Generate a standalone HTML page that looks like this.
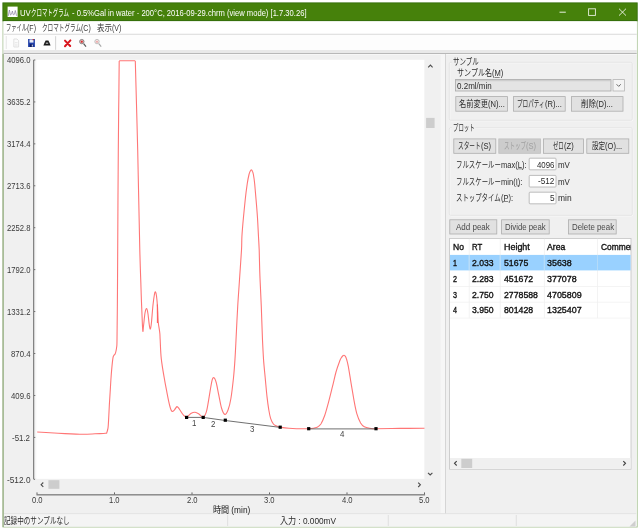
<!DOCTYPE html>
<html lang="ja"><head><meta charset="utf-8"><title>UVクロマトグラム</title>
<style>
html,body{margin:0;padding:0;background:#fff}
body{width:640px;height:530px;position:relative;overflow:hidden;font-family:"Liberation Sans","Noto Sans CJK JP",sans-serif}
#bg{position:absolute;left:0;top:0}
#txt{position:absolute;left:0;top:0;width:640px;height:530px;will-change:transform;transform:translateZ(0)}
.t{position:absolute;white-space:pre;line-height:14px;height:14px;display:block}
.s{display:inline-block;white-space:pre;transform-origin:0 50%;overflow:visible}
</style></head><body>
<svg id="bg" width="640" height="530" viewBox="0 0 640 530">
<!-- window frame -->
<rect x="2.5" y="2.5" width="635.2" height="525" fill="#a9c496"/>
<rect x="3.5" y="3.5" width="633.3" height="523" fill="#fff"/>
<rect x="4" y="20" width="632.2" height="506.4" fill="#f0f0f0"/>
<!-- title bar -->
<rect x="2.5" y="2.5" width="635.1" height="18.8" fill="#356f0c"/>
<rect x="3.3" y="3.3" width="633.5" height="16.8" fill="#46810b"/>
<!-- app icon -->
<rect x="7.6" y="6.6" width="10" height="10.4" fill="#fff"/>
<path d="M8.2 16 L9.4 10 L10.4 15 L11.5 14.2 L12.4 11 L13.3 14.8 L14.4 14.3 L15.3 10.5 L16.6 15.8" fill="none" stroke="#85789a" stroke-width="0.65"/>
<!-- caption buttons -->
<path d="M559.5 12.2 H565.8" stroke="#e8f0e0" stroke-width="1"/>
<rect x="588.6" y="8.8" width="6.8" height="6.6" fill="none" stroke="#e8f0e0" stroke-width="0.9"/>
<path d="M619 8.7 L626 15.6 M626 8.7 L619 15.6" stroke="#f0f5ea" stroke-width="0.9"/>
<!-- menu bar -->
<rect x="3.6" y="21.3" width="633.1" height="12.6" fill="#fff"/>
<!-- toolbar -->
<rect x="3.6" y="34" width="633.1" height="16" fill="#fdfdfd"/>
<rect x="3.6" y="33.8" width="633.1" height="0.9" fill="#d6d6d6"/>
<rect x="3.6" y="50" width="633.1" height="3" fill="#e9e9e9"/>
<rect x="3.6" y="53" width="633.1" height="1" fill="#b8b8b8"/>
<rect x="3.6" y="54" width="633.1" height="1" fill="#f7f7f7"/>
<rect x="5.8" y="36" width="0.8" height="13" fill="#e0e0e0"/>
<!-- toolbar icons -->
<g id="ico-new" opacity="0.55">
<path d="M13.8 39 H17 L18.6 40.6 V47 H13.8 Z" fill="#fafafa" stroke="#b8b8b8" stroke-width="0.7"/>
<path d="M14.8 42.5 H17.6 M14.8 44.2 H17.6 M14.8 45.8 H17.6" stroke="#c8c8c8" stroke-width="0.6"/>
</g>
<g id="ico-save">
<rect x="28.1" y="39" width="6.8" height="8" fill="#1f3fa8"/>
<rect x="29.5" y="39.4" width="4" height="3.2" fill="#e8ecf8"/>
<rect x="29.8" y="44.2" width="3.4" height="2.8" fill="#0a1a60"/>
<rect x="31.8" y="44.6" width="1" height="2" fill="#dfe4f5"/>
<rect x="32.6" y="39" width="1.4" height="1.2" fill="#c03030"/>
</g>
<g id="ico-prn">
<path d="M43.4 45.6 L44.6 42.4 L45.6 40.6 H48.4 L49.4 42.4 L50.6 45.6 Z" fill="#1a1a1a"/>
<rect x="45.8" y="42.6" width="2.4" height="1.2" fill="#bbb"/>
</g>
<rect x="55.3" y="36.2" width="0.8" height="13.6" fill="#c8c8c8"/>
<path d="M65 40.6 L70.2 46 M70.4 40.4 L65 46.2" stroke="#d8141c" stroke-width="2" stroke-linecap="round"/>
<g id="ico-z1">
<circle cx="81.8" cy="41.6" r="2.2" fill="#e8b0b0" stroke="#808080" stroke-width="0.9"/><circle cx="81.8" cy="41.8" r="1" fill="#d03030"/>
<path d="M83.6 43.6 L86 46.6" stroke="#555" stroke-width="1.2"/>
</g>
<g id="ico-z2" opacity="0.7">
<circle cx="97" cy="41.6" r="2.2" fill="#f4d8d8" stroke="#a0a0a0" stroke-width="0.9"/><circle cx="97" cy="41.8" r="0.9" fill="#e07070"/>
<path d="M98.8 43.6 L101.2 46.6" stroke="#888" stroke-width="1.2"/>
</g>
<!-- left pane edge -->
<rect x="2.5" y="54" width="1.3" height="473" fill="#9db28c"/>
<!-- plot -->
<rect x="34" y="59.8" width="3" height="419.1" fill="#f6f6f6"/>
<rect x="36.4" y="59.8" width="388.2" height="419.1" fill="#fff"/>
<rect x="33.3" y="59.8" width="0.9" height="419.6" fill="#555"/>
<g fill="#666">
<rect x="34" y="59.55" width="1.3" height="0.9"/>
<rect x="34" y="101.48" width="1.3" height="0.9"/>
<rect x="34" y="143.41" width="1.3" height="0.9"/>
<rect x="34" y="185.34" width="1.3" height="0.9"/>
<rect x="34" y="227.27" width="1.3" height="0.9"/>
<rect x="34" y="269.20" width="1.3" height="0.9"/>
<rect x="34" y="311.13" width="1.3" height="0.9"/>
<rect x="34" y="353.06" width="1.3" height="0.9"/>
<rect x="34" y="394.99" width="1.3" height="0.9"/>
<rect x="34" y="436.92" width="1.3" height="0.9"/>
<rect x="34" y="478.85" width="1.3" height="0.9"/>
</g>
<!-- v scrollbar -->
<rect x="424.6" y="59.4" width="11" height="419.5" fill="#f0f0f0"/>
<rect x="426.1" y="117.9" width="8.5" height="10.1" fill="#cdcdcd"/>
<path d="M428.2 67.3 L430.4 65.1 L432.6 67.3" fill="none" stroke="#4c4c4c" stroke-width="1.1"/>
<path d="M428 472.8 L430.2 475 L432.4 472.8" fill="none" stroke="#4c4c4c" stroke-width="1.1"/>
<!-- h scrollbar -->
<rect x="35.2" y="478.9" width="389.4" height="10.9" fill="#f0f0f0"/>
<rect x="48.4" y="480.2" width="11" height="8.6" fill="#cdcdcd"/>
<path d="M43.3 482.5 L41.1 484.7 L43.3 486.9" fill="none" stroke="#4c4c4c" stroke-width="1.1"/>
<path d="M418.2 482.6 L420.4 484.8 L418.2 487" fill="none" stroke="#4c4c4c" stroke-width="1.1"/>
<!-- x ruler -->
<rect x="36.5" y="494.3" width="388.6" height="1.1" fill="#666"/>
<g fill="#666">
<rect x="36.50" y="492.4" width="1" height="2"/>
<rect x="114.00" y="492.4" width="1" height="2"/>
<rect x="191.50" y="492.4" width="1" height="2"/>
<rect x="269.00" y="492.4" width="1" height="2"/>
<rect x="346.50" y="492.4" width="1" height="2"/>
<rect x="424.00" y="492.4" width="1" height="2"/>
</g>
<!-- curve -->
<path d="M37.2 432.0 C39.3 432.1 45.4 432.5 50.0 432.8 C54.6 433.1 59.5 433.4 65.0 433.6 C70.5 433.9 78.0 434.3 83.0 434.3 C88.0 434.3 91.2 434.0 95.0 433.8 C98.8 433.6 103.5 433.5 105.5 433.3 C107.5 433.1 106.5 433.1 106.8 432.5 C107.1 431.9 107.3 431.2 107.6 430.0 C107.8 428.8 108.0 429.3 108.3 425.0 C108.6 420.7 109.1 410.2 109.4 404.0 C109.8 397.8 110.1 393.0 110.4 388.0 C110.7 383.0 110.9 378.9 111.3 374.0 C111.7 369.1 112.4 362.0 112.8 358.9 C113.2 355.8 113.4 356.3 113.8 355.5 C114.2 354.7 114.7 354.8 115.1 354.0 C115.5 353.2 115.8 352.1 116.0 351.0 C116.2 349.9 116.4 349.3 116.6 347.5 C116.8 345.7 116.9 347.9 117.0 340.0 C117.1 332.1 117.3 315.0 117.4 300.0 C117.5 285.0 117.6 275.0 117.7 250.0 C117.8 225.0 118.1 175.0 118.3 150.0 C118.5 125.0 118.6 114.8 118.8 100.0 C119.0 85.2 119.1 67.5 119.2 61.0 M119.2 60.8 L135.3 60.8 M135.3 61.0 C135.7 75.8 136.9 118.5 137.7 150.0 C138.4 181.5 139.2 227.1 139.8 250.0 C140.4 272.9 140.7 277.3 141.0 287.7 C141.3 298.1 141.6 305.1 141.9 312.3 C142.2 319.5 142.5 328.9 142.8 331.0 C143.1 333.1 143.2 328.0 143.6 325.0 C144.0 322.0 144.5 315.8 145.0 313.0 C145.5 310.2 146.1 308.3 146.6 308.5 C147.1 308.7 147.6 311.2 148.0 314.0 C148.4 316.8 148.9 322.5 149.3 325.0 C149.7 327.5 150.0 329.5 150.4 329.0 C150.8 328.5 151.1 326.0 151.5 322.0 C151.9 318.0 152.5 309.7 153.0 305.0 C153.5 300.3 154.1 296.2 154.5 294.0 C154.9 291.8 155.2 291.7 155.5 292.0 C155.8 292.3 156.2 293.6 156.5 296.0 C156.8 298.4 157.2 302.3 157.5 306.6 C157.8 310.9 157.8 317.3 158.2 321.7 C158.6 326.1 159.5 329.9 159.8 333.0 C160.1 336.1 159.9 335.7 160.2 340.0 C160.4 344.3 160.6 352.6 161.3 358.9 C162.0 365.2 163.2 372.0 164.2 377.7 C165.1 383.4 166.1 388.1 167.0 392.8 C167.9 397.5 169.0 402.9 169.8 406.0 C170.6 409.1 171.2 410.7 172.0 411.3 C172.8 411.9 173.7 410.6 174.5 409.8 C175.3 409.0 176.2 406.8 177.0 406.6 C177.8 406.5 178.2 407.6 179.2 408.9 C180.2 410.2 181.8 413.1 183.0 414.5 C184.2 415.9 185.0 417.2 186.4 417.0 C187.8 416.8 189.9 414.0 191.3 413.2 C192.8 412.4 193.8 412.2 195.1 412.3 C196.4 412.4 197.6 413.2 198.9 414.0 C200.2 414.8 201.9 417.4 203.2 417.0 C204.4 416.6 205.4 415.1 206.4 411.7 C207.4 408.3 208.3 401.8 209.2 396.6 C210.1 391.4 211.2 383.8 212.0 380.6 C212.8 377.5 213.3 377.4 214.0 377.7 C214.7 378.0 215.4 379.7 216.2 382.5 C217.0 385.3 217.8 390.4 218.7 394.7 C219.6 398.9 220.5 404.7 221.5 408.0 C222.5 411.3 223.8 414.2 224.9 414.5 C226.0 414.8 227.1 412.5 228.1 409.8 C229.1 407.1 230.0 403.9 230.9 398.5 C231.8 393.1 232.8 384.3 233.5 377.7 C234.2 371.1 234.6 365.2 235.0 358.9 C235.4 352.6 235.6 348.7 236.0 340.0 C236.4 331.3 237.1 316.9 237.7 306.6 C238.3 296.3 239.0 287.7 239.6 278.3 C240.2 268.9 241.1 256.9 241.5 250.0 C241.9 243.1 241.6 242.1 241.9 236.8 C242.2 231.5 242.8 224.3 243.4 218.0 C244.0 211.7 244.7 204.7 245.3 199.0 C245.9 193.3 246.6 188.1 247.2 184.0 C247.8 179.9 248.5 176.6 249.0 174.5 C249.5 172.4 249.8 172.0 250.2 171.2 C250.6 170.4 250.9 169.9 251.3 169.9 C251.7 169.9 252.1 170.4 252.4 171.2 C252.8 172.0 253.0 172.4 253.4 174.5 C253.8 176.6 254.3 179.9 254.7 184.0 C255.1 188.1 255.5 193.3 256.0 199.0 C256.5 204.7 257.1 211.7 257.5 218.0 C257.9 224.3 258.2 231.5 258.5 236.8 C258.8 242.1 258.9 243.1 259.2 250.0 C259.4 256.9 259.6 268.9 260.0 278.3 C260.4 287.7 260.9 296.3 261.3 306.6 C261.7 316.9 262.1 331.3 262.5 340.0 C262.9 348.7 263.1 352.6 263.5 358.9 C263.9 365.2 264.6 371.4 265.2 377.7 C265.8 384.0 266.4 391.2 267.0 396.6 C267.6 402.0 268.2 406.2 268.8 409.8 C269.4 413.4 269.8 415.9 270.6 418.3 C271.4 420.7 272.5 422.8 273.4 424.0 C274.3 425.2 275.1 425.3 276.2 425.8 C277.3 426.3 278.1 426.8 280.2 427.2 C282.3 427.6 284.1 428.1 288.9 428.3 C293.6 428.6 304.0 428.9 308.7 428.7 C313.4 428.5 315.2 428.0 317.2 427.2 C319.2 426.4 319.6 425.9 320.9 424.0 C322.1 422.1 323.4 419.1 324.7 415.5 C326.0 411.9 327.2 407.0 328.5 402.3 C329.8 397.6 331.1 392.2 332.3 387.2 C333.6 382.1 334.8 376.4 336.0 372.0 C337.2 367.6 338.9 363.2 339.8 360.8 C340.7 358.4 340.8 358.6 341.3 357.8 C341.8 357.0 342.2 356.4 342.6 356.0 C343.1 355.6 343.5 355.1 344.0 355.2 C344.5 355.3 344.9 355.6 345.4 356.4 C345.9 357.2 346.3 358.3 346.8 360.0 C347.3 361.7 347.6 362.5 348.3 366.4 C349.0 370.3 350.2 377.7 351.1 383.4 C352.1 389.1 353.1 395.4 354.0 400.4 C354.9 405.4 355.7 409.8 356.8 413.6 C357.9 417.4 359.4 420.8 360.6 423.0 C361.9 425.2 362.7 425.9 364.3 426.8 C365.9 427.7 368.1 428.0 370.0 428.3 C371.9 428.6 371.0 428.7 376.0 428.7 C381.0 428.7 391.9 428.5 400.0 428.4 C408.1 428.3 420.4 428.3 424.5 428.3" fill="none" stroke="#ff7676" stroke-width="1.1" stroke-linejoin="round"/>
<path d="M157.4 304.5 L157.5 323" stroke="#ff6060" stroke-width="1.2" fill="none"/>
<!-- baselines -->
<path d="M186.6 417.4 L203.2 417.4 L225.3 420.5 L280.2 427.4 M308.7 428.9 L376 428.9" fill="none" stroke="#606060" stroke-width="0.9"/>
<g fill="#000">
<rect x="185" y="415.8" width="3.2" height="3.2"/>
<rect x="201.6" y="415.8" width="3.2" height="3.2"/>
<rect x="223.7" y="418.6" width="3.2" height="3.2"/>
<rect x="278.6" y="425.6" width="3.2" height="3.2"/>
<rect x="307.1" y="427.1" width="3.2" height="3.2"/>
<rect x="374.4" y="427.1" width="3.2" height="3.2"/>
</g>
<!-- splitter -->
<rect x="440.6" y="54" width="4.4" height="459.6" fill="#f6f6f6"/>
<rect x="445" y="54" width="0.9" height="459.6" fill="#d2d2d2"/>
<!-- group boxes -->
<rect x="449.9" y="62.9" width="183" height="58" rx="1.5" fill="none" stroke="#fafafa" stroke-width="0.8"/>
<rect x="449.3" y="62.3" width="183" height="58" rx="1.5" fill="none" stroke="#e2e2e2" stroke-width="0.8"/>
<rect x="451.8" y="58" width="27.8" height="8" fill="#f0f0f0"/>
<rect x="449.9" y="128.2" width="183" height="87.8" rx="1.5" fill="none" stroke="#fafafa" stroke-width="0.8"/>
<rect x="449.3" y="127.6" width="183" height="87.8" rx="1.5" fill="none" stroke="#e2e2e2" stroke-width="0.8"/>
<rect x="451.8" y="123.5" width="23.6" height="8" fill="#f0f0f0"/>
<!-- combo -->
<rect x="455.4" y="79.6" width="155.6" height="11.4" fill="#e4e4e4" stroke="#a8a8a8" stroke-width="0.8"/>
<rect x="456" y="80.2" width="154.6" height="1" fill="#b8b8b8" opacity="0.6"/>
<rect x="613" y="79.6" width="11.4" height="11.4" fill="#f4f4f4" stroke="#b4b4b4" stroke-width="0.8"/>
<path d="M616.6 84.3 L618.7 86.4 L620.8 84.3" fill="none" stroke="#555" stroke-width="0.9"/>
<!-- buttons -->
<g fill="#e1e1e1" stroke="#adadad" stroke-width="0.8">
<rect x="455.8" y="96.6" width="51.6" height="14.6"/>
<rect x="513.6" y="96.6" width="51.6" height="14.6"/>
<rect x="571.4" y="96.6" width="51.6" height="14.6"/>
<rect x="453.8" y="138.9" width="42" height="14.4"/>
<rect x="543.6" y="138.9" width="39.8" height="14.4"/>
<rect x="586.8" y="138.9" width="42" height="14.4"/>
<rect x="449.8" y="219.8" width="47" height="14.2"/>
<rect x="501.6" y="219.8" width="47.6" height="14.2"/>
<rect x="568.6" y="219.8" width="47.6" height="14.2"/>
</g>
<rect x="498.8" y="138.9" width="41.8" height="14.4" fill="#cccccc" stroke="#bfbfbf" stroke-width="0.8"/>
<!-- inputs -->
<g fill="#fff" stroke="#adadad" stroke-width="0.8">
<rect x="529.2" y="158.2" width="26.8" height="11.6" rx="0.8"/>
<rect x="529.2" y="175.4" width="26.8" height="11.6" rx="0.8"/>
<rect x="529.2" y="192.2" width="26.8" height="11.6" rx="0.8"/>
</g>
<g fill="#444">
<rect x="494.7" y="77" width="5" height="0.6"/>
<rect x="517.5" y="168.6" width="5" height="0.6"/>
<rect x="516.5" y="185.6" width="3.2" height="0.6"/>
<rect x="503" y="201.4" width="5.2" height="0.6"/>
</g>
<!-- table -->
<rect x="449.6" y="238.4" width="181.4" height="230.8" fill="#fff" stroke="#c4c4c4" stroke-width="0.8"/>
<rect x="450" y="254.9" width="180.6" height="15.5" fill="#99d1ff"/>
<g fill="#f0f0f0">
<rect x="468.8" y="238.8" width="0.8" height="79.4"/>
<rect x="499.8" y="238.8" width="0.8" height="79.4"/>
<rect x="543.9" y="238.8" width="0.8" height="79.4"/>
<rect x="597.2" y="238.8" width="0.8" height="79.4"/>
<rect x="450" y="286" width="180.6" height="0.7"/>
<rect x="450" y="301.8" width="180.6" height="0.7"/>
<rect x="450" y="317.7" width="180.6" height="0.7"/>
</g>
<g fill="#a9d7fb">
<rect x="468.8" y="254.9" width="0.8" height="15.5"/>
<rect x="499.8" y="254.9" width="0.8" height="15.5"/>
<rect x="543.9" y="254.9" width="0.8" height="15.5"/>
<rect x="597.2" y="254.9" width="0.8" height="15.5"/>
</g>
<rect x="450" y="458" width="180.6" height="10.8" fill="#f0f0f0"/>
<rect x="461.3" y="458.8" width="10.9" height="9.2" fill="#cdcdcd"/>
<path d="M456.7 461.1 L454.5 463.3 L456.7 465.5" fill="none" stroke="#404040" stroke-width="1.1"/>
<path d="M623.3 461.1 L625.5 463.3 L623.3 465.5" fill="none" stroke="#404040" stroke-width="1.1"/>
<!-- status bar -->
<rect x="4" y="513.8" width="632.2" height="12.8" fill="#f4f4f4"/>
<rect x="4" y="513.4" width="632.2" height="0.7" fill="#dcdcdc"/>
<g fill="#dadada">
<rect x="227.3" y="515" width="0.8" height="11"/>
<rect x="387.8" y="515" width="0.8" height="11"/>
<rect x="515.8" y="515" width="0.8" height="11"/>
</g>
<path d="M635.5 520.5 L629.5 526.5 H635.5 Z" fill="#c6c6c6" opacity="0.8"/>
</svg>
<div id="comme" style="position:absolute;left:597px;top:240px;width:33.6px;height:14px;overflow:hidden;will-change:transform"><span class="t" style="left:4px;top:0.3px;font-size:9px;color:#111;-webkit-text-stroke:0.35px #111;transform-origin:0 50%;transform:scaleX(0.93)">Comment</span></div>
<div id="txt">
<span class="t" style="left:20.00px;top:5.50px;font-size:8.8px;color:#fff;"><span class="s" style="width:10.77px;transform:scaleX(0.8800)">UV</span><span class="s" style="width:37.98px;transform:scaleX(0.6194)">クロマトグラム</span></span>
<span class="t" style="left:71.50px;top:5.50px;font-size:8.8px;color:#fff;"><span class="s" style="width:234.50px;transform:scaleX(0.8654)">- 0.5%Gal in water - 200°C, 2016-09-29.chrm (view mode) [1.7.30.26]</span></span>
<span class="t" style="left:6.00px;top:20.50px;font-size:9px;color:#3a3a3a;"><span class="s" style="width:21.03px;transform:scaleX(0.5839)">ファイル</span><span class="s" style="width:8.97px;transform:scaleX(0.7800)">(F)</span></span>
<span class="t" style="left:42.20px;top:20.50px;font-size:9px;color:#3a3a3a;"><span class="s" style="width:39.05px;transform:scaleX(0.6225)">クロマトグラム</span><span class="s" style="width:9.75px;transform:scaleX(0.7800)">(C)</span></span>
<span class="t" style="left:96.60px;top:20.50px;font-size:9px;color:#3a3a3a;"><span class="s" style="width:15.04px;transform:scaleX(0.8348)">表示</span><span class="s" style="width:9.36px;transform:scaleX(0.7800)">(V)</span></span>
<span class="t" style="left:6.50px;top:53.30px;font-size:8.5px;color:#3a3a3a;"><span class="s" style="width:23.50px;transform:scaleX(0.9038)">4096.0</span></span>
<span class="t" style="left:6.50px;top:95.23px;font-size:8.5px;color:#3a3a3a;"><span class="s" style="width:23.50px;transform:scaleX(0.9038)">3635.2</span></span>
<span class="t" style="left:6.50px;top:137.16px;font-size:8.5px;color:#3a3a3a;"><span class="s" style="width:23.50px;transform:scaleX(0.9038)">3174.4</span></span>
<span class="t" style="left:6.50px;top:179.09px;font-size:8.5px;color:#3a3a3a;"><span class="s" style="width:23.50px;transform:scaleX(0.9038)">2713.6</span></span>
<span class="t" style="left:6.50px;top:221.02px;font-size:8.5px;color:#3a3a3a;"><span class="s" style="width:23.50px;transform:scaleX(0.9038)">2252.8</span></span>
<span class="t" style="left:6.50px;top:262.95px;font-size:8.5px;color:#3a3a3a;"><span class="s" style="width:23.50px;transform:scaleX(0.9038)">1792.0</span></span>
<span class="t" style="left:6.50px;top:304.88px;font-size:8.5px;color:#3a3a3a;"><span class="s" style="width:23.50px;transform:scaleX(0.9038)">1331.2</span></span>
<span class="t" style="left:10.50px;top:346.81px;font-size:8.5px;color:#3a3a3a;"><span class="s" style="width:19.50px;transform:scaleX(0.9163)">870.4</span></span>
<span class="t" style="left:10.50px;top:388.74px;font-size:8.5px;color:#3a3a3a;"><span class="s" style="width:19.50px;transform:scaleX(0.9163)">409.6</span></span>
<span class="t" style="left:12.00px;top:430.67px;font-size:8.5px;color:#3a3a3a;"><span class="s" style="width:18.00px;transform:scaleX(0.9290)">-51.2</span></span>
<span class="t" style="left:6.50px;top:472.60px;font-size:8.5px;color:#3a3a3a;"><span class="s" style="width:23.50px;transform:scaleX(0.9747)">-512.0</span></span>
<span class="t" style="left:31.70px;top:493.30px;font-size:8.5px;color:#3a3a3a;"><span class="s" style="width:10.60px;transform:scaleX(0.8962)">0.0</span></span>
<span class="t" style="left:109.20px;top:493.30px;font-size:8.5px;color:#3a3a3a;"><span class="s" style="width:10.60px;transform:scaleX(0.8962)">1.0</span></span>
<span class="t" style="left:186.70px;top:493.30px;font-size:8.5px;color:#3a3a3a;"><span class="s" style="width:10.60px;transform:scaleX(0.8962)">2.0</span></span>
<span class="t" style="left:264.20px;top:493.30px;font-size:8.5px;color:#3a3a3a;"><span class="s" style="width:10.60px;transform:scaleX(0.8962)">3.0</span></span>
<span class="t" style="left:341.70px;top:493.30px;font-size:8.5px;color:#3a3a3a;"><span class="s" style="width:10.60px;transform:scaleX(0.8962)">4.0</span></span>
<span class="t" style="left:419.20px;top:493.30px;font-size:8.5px;color:#3a3a3a;"><span class="s" style="width:10.60px;transform:scaleX(0.8962)">5.0</span></span>
<span class="t" style="left:212.80px;top:503.00px;font-size:9px;color:#222;"><span class="s" style="width:16.21px;transform:scaleX(0.9000)">時間</span><span class="s" style="width:21.29px;transform:scaleX(0.9255)"> (min)</span></span>
<span class="t" style="left:192.40px;top:415.80px;font-size:8.5px;color:#444;"><span class="s" style="width:4.40px;transform:scaleX(0.9294)">1</span></span>
<span class="t" style="left:210.80px;top:417.30px;font-size:8.5px;color:#444;"><span class="s" style="width:4.40px;transform:scaleX(0.9294)">2</span></span>
<span class="t" style="left:250.10px;top:421.90px;font-size:8.5px;color:#444;"><span class="s" style="width:4.40px;transform:scaleX(0.9294)">3</span></span>
<span class="t" style="left:339.50px;top:426.60px;font-size:8.5px;color:#444;"><span class="s" style="width:4.40px;transform:scaleX(0.9294)">4</span></span>
<span class="t" style="left:452.80px;top:55.00px;font-size:9px;color:#2b2b2b;"><span class="s" style="width:25.80px;transform:scaleX(0.7220)">サンプル</span></span>
<span class="t" style="left:456.70px;top:65.80px;font-size:9px;color:#2b2b2b;"><span class="s" style="width:35.06px;transform:scaleX(0.7837)">サンプル名</span><span class="s" style="width:11.34px;transform:scaleX(0.8400)">(M)</span></span>
<span class="t" style="left:457.20px;top:78.70px;font-size:8.5px;color:#2b2b2b;"><span class="s" style="width:34.70px;transform:scaleX(0.9418)">0.2ml/min</span></span>
<span class="t" style="left:458.75px;top:97.20px;font-size:9px;color:#2b2b2b;"><span class="s" style="width:28.85px;transform:scaleX(0.8010)">名前変更</span><span class="s" style="width:16.80px;transform:scaleX(0.8400)">(N)...</span></span>
<span class="t" style="left:517.00px;top:97.20px;font-size:9px;color:#2b2b2b;"><span class="s" style="width:27.70px;transform:scaleX(0.6229)">プロパティ</span><span class="s" style="width:16.80px;transform:scaleX(0.8400)">(R)...</span></span>
<span class="t" style="left:581.00px;top:97.20px;font-size:9px;color:#2b2b2b;"><span class="s" style="width:15.20px;transform:scaleX(0.8437)">削除</span><span class="s" style="width:16.80px;transform:scaleX(0.8400)">(D)...</span></span>
<span class="t" style="left:452.80px;top:120.50px;font-size:9px;color:#2b2b2b;"><span class="s" style="width:21.60px;transform:scaleX(0.5997)">プロット</span></span>
<span class="t" style="left:458.30px;top:139.25px;font-size:9px;color:#2b2b2b;"><span class="s" style="width:22.62px;transform:scaleX(0.6281)">スタート</span><span class="s" style="width:10.08px;transform:scaleX(0.8400)">(S)</span></span>
<span class="t" style="left:503.60px;top:139.25px;font-size:9px;color:#a0a0a0;"><span class="s" style="width:21.92px;transform:scaleX(0.6086)">ストップ</span><span class="s" style="width:10.08px;transform:scaleX(0.8400)">(S)</span></span>
<span class="t" style="left:553.30px;top:139.25px;font-size:9px;color:#2b2b2b;"><span class="s" style="width:10.64px;transform:scaleX(0.5906)">ゼロ</span><span class="s" style="width:9.66px;transform:scaleX(0.8400)">(Z)</span></span>
<span class="t" style="left:591.60px;top:139.25px;font-size:9px;color:#2b2b2b;"><span class="s" style="width:13.18px;transform:scaleX(0.7316)">設定</span><span class="s" style="width:17.22px;transform:scaleX(0.8400)">(O)...</span></span>
<span class="t" style="left:456.40px;top:157.90px;font-size:9px;color:#2b2b2b;"><span class="s" style="width:44.97px;transform:scaleX(0.7136)">フルスケールー</span><span class="s" style="width:25.63px;transform:scaleX(0.8400)">max(L):</span></span>
<span class="t" style="left:456.40px;top:174.70px;font-size:9px;color:#2b2b2b;"><span class="s" style="width:44.88px;transform:scaleX(0.7122)">フルスケールー</span><span class="s" style="width:21.42px;transform:scaleX(0.8400)">min(I):</span></span>
<span class="t" style="left:456.40px;top:190.70px;font-size:9px;color:#2b2b2b;"><span class="s" style="width:44.72px;transform:scaleX(0.7118)">ストップタイム</span><span class="s" style="width:12.18px;transform:scaleX(0.8400)">(P):</span></span>
<span class="t" style="left:536.90px;top:157.50px;font-size:8.5px;color:#2b2b2b;"><span class="s" style="width:17.50px;transform:scaleX(0.9249)">4096</span></span>
<span class="t" style="left:538.00px;top:174.30px;font-size:8.5px;color:#2b2b2b;"><span class="s" style="width:16.40px;transform:scaleX(0.9638)">-512</span></span>
<span class="t" style="left:549.80px;top:190.70px;font-size:8.5px;color:#2b2b2b;"><span class="s" style="width:4.60px;transform:scaleX(0.9716)">5</span></span>
<span class="t" style="left:558.30px;top:157.90px;font-size:8.5px;color:#2b2b2b;"><span class="s" style="width:11.90px;transform:scaleX(0.9333)">mV</span></span>
<span class="t" style="left:558.30px;top:174.70px;font-size:8.5px;color:#2b2b2b;"><span class="s" style="width:11.90px;transform:scaleX(0.9333)">mV</span></span>
<span class="t" style="left:558.30px;top:190.70px;font-size:8.5px;color:#2b2b2b;"><span class="s" style="width:13.60px;transform:scaleX(0.9925)">min</span></span>
<span class="t" style="left:456.20px;top:219.80px;font-size:8.5px;color:#484848;"><span class="s" style="width:33.80px;transform:scaleX(0.9409)">Add peak</span></span>
<span class="t" style="left:505.00px;top:219.80px;font-size:8.5px;color:#484848;"><span class="s" style="width:40.60px;transform:scaleX(0.9140)">Divide peak</span></span>
<span class="t" style="left:571.50px;top:219.80px;font-size:8.5px;color:#484848;"><span class="s" style="width:42.10px;transform:scaleX(0.9278)">Delete peak</span></span>
<span class="t" style="left:452.80px;top:240.30px;font-size:9px;color:#111;-webkit-text-stroke:0.35px #111;"><span class="s" style="width:10.95px;transform:scaleX(0.9509)">No</span></span>
<span class="t" style="left:472.30px;top:240.30px;font-size:9px;color:#111;-webkit-text-stroke:0.35px #111;"><span class="s" style="width:10.20px;transform:scaleX(0.8612)">RT</span></span>
<span class="t" style="left:503.60px;top:240.30px;font-size:9px;color:#111;-webkit-text-stroke:0.35px #111;"><span class="s" style="width:25.80px;transform:scaleX(0.9917)">Height</span></span>
<span class="t" style="left:547.20px;top:240.30px;font-size:9px;color:#111;-webkit-text-stroke:0.35px #111;"><span class="s" style="width:18.30px;transform:scaleX(0.9624)">Area</span></span>
<span class="t" style="left:453.00px;top:255.90px;font-size:9px;color:#111;-webkit-text-stroke:0.35px #111;"><span class="s" style="width:4.00px;transform:scaleX(0.7975)">1</span></span>
<span class="t" style="left:472.30px;top:255.90px;font-size:9px;color:#111;-webkit-text-stroke:0.35px #111;"><span class="s" style="width:21.60px;transform:scaleX(0.9587)">2.033</span></span>
<span class="t" style="left:503.60px;top:255.90px;font-size:9px;color:#111;-webkit-text-stroke:0.35px #111;"><span class="s" style="width:24.25px;transform:scaleX(0.9688)">51675</span></span>
<span class="t" style="left:547.20px;top:255.90px;font-size:9px;color:#111;-webkit-text-stroke:0.35px #111;"><span class="s" style="width:24.75px;transform:scaleX(0.9888)">35638</span></span>
<span class="t" style="left:453.00px;top:271.75px;font-size:9px;color:#111;-webkit-text-stroke:0.35px #111;"><span class="s" style="width:4.00px;transform:scaleX(0.7975)">2</span></span>
<span class="t" style="left:472.30px;top:271.75px;font-size:9px;color:#111;-webkit-text-stroke:0.35px #111;"><span class="s" style="width:21.60px;transform:scaleX(0.9587)">2.283</span></span>
<span class="t" style="left:503.60px;top:271.75px;font-size:9px;color:#111;-webkit-text-stroke:0.35px #111;"><span class="s" style="width:29.10px;transform:scaleX(0.9685)">451672</span></span>
<span class="t" style="left:547.20px;top:271.75px;font-size:9px;color:#111;-webkit-text-stroke:0.35px #111;"><span class="s" style="width:29.70px;transform:scaleX(0.9885)">377078</span></span>
<span class="t" style="left:453.00px;top:287.60px;font-size:9px;color:#111;-webkit-text-stroke:0.35px #111;"><span class="s" style="width:4.00px;transform:scaleX(0.7975)">3</span></span>
<span class="t" style="left:472.30px;top:287.60px;font-size:9px;color:#111;-webkit-text-stroke:0.35px #111;"><span class="s" style="width:21.60px;transform:scaleX(0.9587)">2.750</span></span>
<span class="t" style="left:503.60px;top:287.60px;font-size:9px;color:#111;-webkit-text-stroke:0.35px #111;"><span class="s" style="width:33.95px;transform:scaleX(0.9687)">2778588</span></span>
<span class="t" style="left:547.20px;top:287.60px;font-size:9px;color:#111;-webkit-text-stroke:0.35px #111;"><span class="s" style="width:34.65px;transform:scaleX(0.9887)">4705809</span></span>
<span class="t" style="left:453.00px;top:303.45px;font-size:9px;color:#111;-webkit-text-stroke:0.35px #111;"><span class="s" style="width:4.00px;transform:scaleX(0.7975)">4</span></span>
<span class="t" style="left:472.30px;top:303.45px;font-size:9px;color:#111;-webkit-text-stroke:0.35px #111;"><span class="s" style="width:21.60px;transform:scaleX(0.9587)">3.950</span></span>
<span class="t" style="left:503.60px;top:303.45px;font-size:9px;color:#111;-webkit-text-stroke:0.35px #111;"><span class="s" style="width:29.10px;transform:scaleX(0.9685)">801428</span></span>
<span class="t" style="left:547.20px;top:303.45px;font-size:9px;color:#111;-webkit-text-stroke:0.35px #111;"><span class="s" style="width:34.65px;transform:scaleX(0.9887)">1325407</span></span>
<span class="t" style="left:3.75px;top:514.25px;font-size:9px;color:#2b2b2b;"><span class="s" style="width:65.65px;transform:scaleX(0.7316)">記録中のサンプルなし</span></span>
<span class="t" style="left:280.00px;top:514.00px;font-size:9px;color:#2b2b2b;"><span class="s" style="width:16.21px;transform:scaleX(0.9000)">入力</span><span class="s" style="width:40.04px;transform:scaleX(0.9197)"> : 0.000mV</span></span>
</div>
</body></html>
